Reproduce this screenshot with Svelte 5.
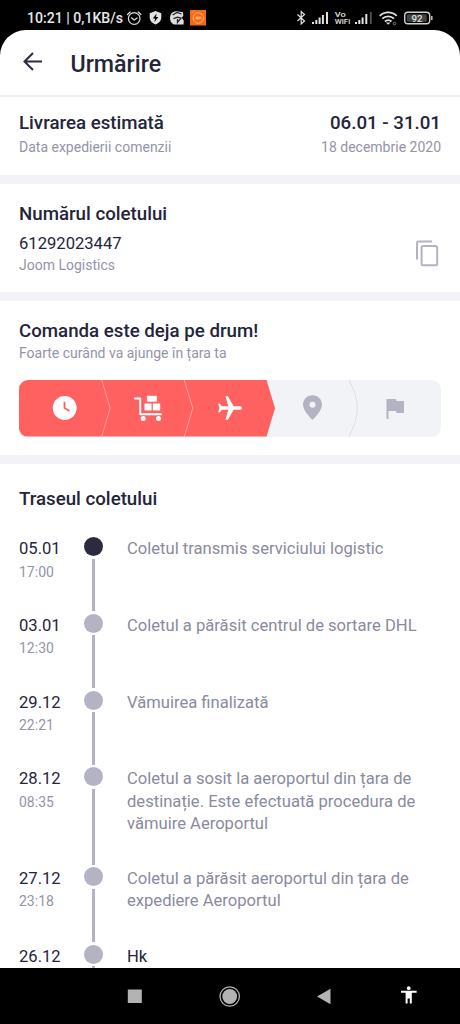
<script>
    const delivery = {
        range: '06.01 - 31.01',
        sent: '18 decembrie 2020',
        number: '61292023447',
        carrier: 'Joom Logistics'
    };

    const events = [
        { date: '05.01', time: '17:00', text: 'Coletul transmis serviciului logistic' },
        { date: '03.01', time: '12:30', text: 'Coletul a părăsit centrul de sortare DHL' },
        { date: '29.12', time: '22:21', text: 'Vămuirea finalizată' },
        { date: '28.12', time: '08:35', text: 'Coletul a sosit la aeroportul din țara de destinație. Este efectuată procedura de vămuire Aeroportul' },
        { date: '27.12', time: '23:18', text: 'Coletul a părăsit aeroportul din țara de expediere Aeroportul' },
        { date: '26.12', time: '', text: 'Hk', dark: true }
    ];
</script>

<div class="phone">
    <div class="status">
        <span class="clock">10:21 | 0,1KB/s</span>
        <svg class="left-icons" width="80" height="18" viewBox="126 9 80 18">
            <g fill="none" stroke="#ddd" stroke-width="1.2" stroke-linecap="round">
                <circle cx="134.200" cy="18.500" r="5.800" />
                <path d="M127.500 14.500l2.600-2.500M140.900 14.500l-2.600-2.500M131.500 17.800l2.700 2.200 3-2" />
            </g>
            <path d="M155.500 11l5.800 2.200v4.600c0 3-2.300 5.300-5.800 6.600-3.500-1.300-5.800-3.600-5.800-6.600v-4.600z" fill="#e2e2e2" />
            <path d="M156.600 13.500l-3.800 5h2.300l-.8 3.800 4-5.300H156z" fill="#000" />
            <path d="M170.500 15c1.500-3.500 5.500-4.500 9-3.200l3.500.5.300 3.500-1.500 2 2 3-.3 3.700H174c-3.500-1.500-4.700-5.500-3.500-9.500z" fill="#ddd" />
            <path d="M172.500 15l4.500-2.500 4.500 1.500M173.500 18.700l4-1.500 3.500 1-3.500 4.300v-3.500" fill="none" stroke="#222" stroke-width="1.300" />
            <rect x="190" y="10" width="16" height="15.500" fill="#f26a16" />
            <circle cx="198.300" cy="18" r="5.200" fill="none" stroke="#ffb273" stroke-width="1" />
            <path d="M195.800 17h5v2h-5zM191.500 13l3-2" fill="#ffa25c" stroke="#ffb273" stroke-width=".7" />
        </svg>
        <svg class="right-icons" width="138" height="18" viewBox="296 9 138 18">
            <path d="M297.500 14.500l7 6.500-3.300 3V11.500l3.300 3-7 6.500" fill="none" stroke="#e2e2e2" stroke-width="1.200" />
            <path d="M313 22v2M316.300 20v4M319.600 17.500v6.500M322.900 15v9M327 12v12M356 22v2M359.300 20v4M362.600 17.500v6.500M366.300 14v10" stroke="#e2e2e2" stroke-width="2" />
            <path d="M370.800 12v12" stroke="#555" stroke-width="1.800" />
            <text x="334.700" y="16.700" font-size="7.500" textLength="11" lengthAdjust="spacingAndGlyphs">Vo</text>
            <text x="334.700" y="24.300" font-size="7.500" textLength="15.500" lengthAdjust="spacingAndGlyphs">WiFi</text>
            <g fill="none" stroke="#e2e2e2" stroke-width="1.700">
                <path d="M379.700 15.800c4.800-4.500 12.200-4.500 17 0M382.300 18.700c3.300-3.200 8.500-3.200 11.800 0M384.900 21.500c2-1.800 4.600-1.800 6.600 0" />
            </g>
            <path d="M386 22.500h4.400l-2.200 2.300z" fill="#e2e2e2" />
            <circle cx="394.500" cy="23.500" r="1.300" fill="none" stroke="#999" stroke-width=".8" />
            <rect x="404.700" y="12.200" width="25" height="11.600" rx="3.300" fill="none" stroke="#d0d0d0" stroke-width="1.400" />
            <rect x="406.700" y="14.200" width="20" height="7.600" rx="1.500" fill="#444" />
            <path d="M431.800 16v4" stroke="#d0d0d0" stroke-width="1.400" />
            <text x="411.500" y="21.600" font-size="9.700" font-weight="700">92</text>
        </svg>
    </div>

    <main>
        <header>
            <svg width="20" height="20" viewBox="0 0 20 20">
                <path d="M19 9.500H1.500M10 1L1.500 9.500 10 18" fill="none" stroke="#2d2d40" stroke-width="2" />
            </svg>
            <h1>Urmărire</h1>
        </header>

        <section class="estimate">
            <div>
                <h2>Livrarea estimată</h2>
                <p class="small">Data expedierii comenzii</p>
            </div>
            <div class="right">
                <h2>{delivery.range}</h2>
                <p class="small">{delivery.sent}</p>
            </div>
        </section>

        <section class="number">
            <h2>Numărul coletului</h2>
            <div class="number-row">
                <div>
                    <p class="code">{delivery.number}</p>
                    <p class="small">{delivery.carrier}</p>
                </div>
                <svg width="24" height="28" viewBox="0 0 24 28">
                    <path d="M2 19.500V3.200q0-1.700 1.700-1.700H17" fill="none" stroke="#b3b3c2" stroke-width="2" />
                    <rect x="6.600" y="6" width="15.600" height="19.300" rx="1.500" fill="none" stroke="#b3b3c2" stroke-width="2" />
                </svg>
            </div>
        </section>

        <section class="progress">
            <h2>Comanda este deja pe drum!</h2>
            <p class="small">Foarte curând va ajunge în țara ta</p>
            <div class="steps">
                <svg class="shape" width="422" height="56.500" viewBox="0 0 422 56.500">
                    <path d="M0 0H247.500L256 28.200 247.500 56.500H0z" fill="#ff6161" />
                    <path d="M82.700 0L91.200 28.200 82.700 56.500M165.300 0L173.800 28.200 165.300 56.500" fill="none" stroke="#ffa0a0" />
                    <path d="M330 0Q338.300 16 338.300 28.200T330 56.500" fill="none" stroke="#dddfe6" />
                </svg>
                <svg class="step" viewBox="0 0 30 30">
                    <circle cx="14.700" cy="15" r="11.900" fill="#fff" />
                    <path d="M14.500 8.800v6.300l5 3" fill="none" stroke="#ff6161" stroke-width="1.800" />
                </svg>
                <svg class="step" viewBox="0 0 30 30">
                    <path d="M1.200 5.500h6v15.700h21.500" fill="none" stroke="#fff" stroke-width="2" stroke-linejoin="round" />
                    <path d="M14.200 3h9.500v5.500h-9.500zM11.700 10.700h6.700v6.500h-6.700zM20 10.700h7v6.500h-7z" fill="#fff" stroke="#fff" stroke-width=".4" />
                    <circle cx="10.200" cy="25.500" r="2.500" fill="#fff" />
                    <circle cx="25.500" cy="25.500" r="2.500" fill="#fff" />
                </svg>
                <svg class="step" viewBox="0 0 30 30">
                    <path d="M26.900 15c0-1-.8-1.800-1.800-1.800h-6.400L12.800 3.300h-2.400l2.900 9.900H6.900L5 10.700H3.200L4.400 15l-1.200 4.300H5l1.900-2.500h6.400l-2.900 9.900h2.400l5.900-9.900h6.400c1 0 1.800-.8 1.800-1.800z" fill="#fff" />
                </svg>
                <svg class="step" viewBox="0 0 30 30">
                    <path fill-rule="evenodd" d="M14.500 2.300c-5.300 0-9.500 4.100-9.500 9.300C5 18.500 14.500 27 14.500 27s9.500-8.500 9.500-15.400c0-5.200-4.200-9.300-9.500-9.300zm0 6.500a3 3 0 110 6 3 3 0 010-6z" fill="#b3b3c4" />
                </svg>
                <svg class="step" viewBox="0 0 30 30">
                    <path d="M6.500 6h9.500l.5 2H24v12h-7.500l-.5-2H8.500v8h-2z" fill="#b3b3c4" />
                </svg>
            </div>
        </section>

        <section class="route">
            <h2>Traseul coletului</h2>
            {#each events as event, i}
                <div class="event">
                    <div class="when">
                        <p class="date">{event.date}</p>
                        <p class="time">{event.time}</p>
                    </div>
                    <div class="track">
                        <span class="dot" class:active={i === 0}></span>
                        <span class="line"></span>
                    </div>
                    <p class="text" class:dark={event.dark}>{event.text}</p>
                </div>
            {/each}
        </section>
    </main>

    <nav>
        <svg width="300" height="26" viewBox="120 983 300 26">
            <rect x="127.800" y="989.500" width="14" height="13.500" fill="#b3b3b3" />
            <circle cx="229.700" cy="996.500" r="9.700" fill="none" stroke="#b3b3b3" stroke-width="1.300" />
            <circle cx="229.700" cy="996.500" r="7.400" fill="#b3b3b3" />
            <path d="M317 996.500l13.500-7.700v15.400z" fill="#b3b3b3" />
            <circle cx="408.700" cy="988.200" r="1.900" fill="#fff" />
            <path d="M401 990.800h15.600v2h-4.800v10.700h-2v-5h-2.200v5h-2v-10.700H401z" fill="#fff" />
        </svg>
    </nav>
</div>

<style>
    :global(body) {
        margin: 0;
        background: #000;
    }
    .phone {
        display: flex;
        flex-direction: column;
        width: 460px;
        height: 1024px;
        overflow: hidden;
        background: #000;
        color: #24243a;
        font-family: Roboto, "Noto Sans", sans-serif;
    }
    h1, h2, p {
        margin: 0;
    }
    .status {
        display: flex;
        flex: none;
        align-items: flex-start;
        height: 20.500px;
        padding: 9px 26px 0 27px;
        color: #e8e8e8;
    }
    .clock {
        width: 99px;
        white-space: nowrap;
        font-size: 14.100px;
        font-weight: 500;
        line-height: 19px;
    }
    .right-icons {
        margin-left: auto;
    }
    .right-icons text {
        fill: #e2e2e2;
        font-weight: 500;
    }
    main {
        display: flex;
        flex: none;
        flex-direction: column;
        height: 938.500px;
        overflow: hidden;
        background: #fff;
        border-radius: 26px 26px 0 0;
    }
    header {
        display: flex;
        flex: none;
        align-items: center;
        gap: 27.500px;
        box-sizing: border-box;
        height: 67.500px;
        padding: 0 23px;
        border-bottom: 2px solid #f0f0f2;
    }
    h1 {
        padding-top: 3px;
        font-size: 23.200px;
        font-weight: 500;
        line-height: 30px;
    }
    h2 {
        font-size: 18.700px;
        font-weight: 500;
        line-height: 24px;
    }
    section {
        flex: none;
        box-sizing: border-box;
        padding: 0 19px;
        border-bottom: 9px solid #f2f2f7;
    }
    .small {
        color: #9494a8;
        font-size: 14px;
        line-height: 20px;
    }
    .estimate {
        display: flex;
        justify-content: space-between;
        height: 87px;
        padding-top: 14px;
    }
    .estimate .small {
        padding-top: 2px;
    }
    .right {
        text-align: right;
    }
    .number {
        height: 117px;
        padding-top: 18px;
    }
    .number-row {
        display: flex;
        align-items: center;
        justify-content: space-between;
        padding: 7px 2px 0 0;
    }
    .code {
        font-size: 16.600px;
        line-height: 22px;
    }
    .progress {
        height: 163px;
        padding-top: 18px;
    }
    .steps {
        position: relative;
        display: flex;
        align-items: center;
        justify-content: space-between;
        box-sizing: border-box;
        width: 422px;
        height: 56.500px;
        margin-top: 17px;
        padding: 0 31px;
        overflow: hidden;
        background: #f2f3f7;
        border-radius: 9px;
    }
    .shape {
        position: absolute;
        top: 0;
        left: 0;
    }
    .step {
        position: relative;
        width: 30px;
        height: 30px;
    }
    .route {
        padding-top: 23px;
        border-bottom: 0;
    }
    .route h2 {
        padding-bottom: 26.300px;
    }
    .event {
        display: flex;
        min-height: 76.700px;
    }
    .when {
        width: 65px;
    }
    .date {
        font-size: 16.600px;
        line-height: 22.300px;
        padding-top: 1px;
    }
    .time {
        color: #9494a8;
        font-size: 14px;
        line-height: 23px;
    }
    .track {
        display: flex;
        flex-direction: column;
        align-items: center;
        gap: 2.500px;
        width: 19px;
        padding-bottom: 2.500px;
    }
    .dot {
        flex: none;
        width: 19px;
        height: 19px;
        border-radius: 50%;
        background: #b3b3c4;
    }
    .dot.active {
        background: #2b2b40;
    }
    .line {
        flex: 1;
        width: 2.500px;
        background: #b3b3c4;
    }
    .text {
        flex: 1;
        padding: 1px 0 32.200px 24px;
        color: #8a8a9e;
        font-size: 16.600px;
        line-height: 22.200px;
    }
    .text.dark {
        color: #24243a;
    }
    nav {
        flex: none;
        height: 41px;
        padding: 15px 0 0 120px;
    }
</style>
